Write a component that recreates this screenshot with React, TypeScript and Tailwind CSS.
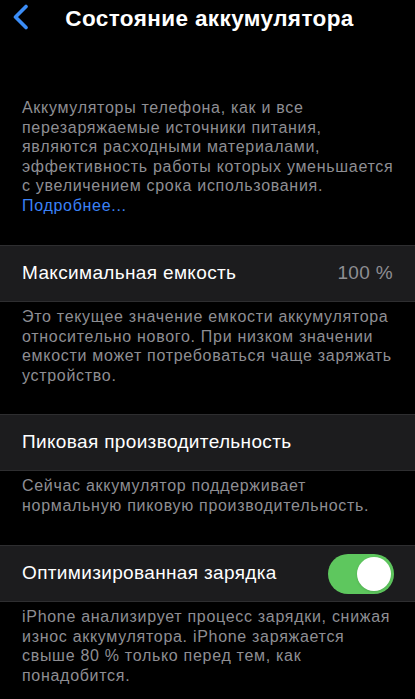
export default function App() {
  return (
    <div
      className="w-[415px] h-[699px] overflow-hidden bg-black text-white"
      style={{ fontFamily: '"Liberation Sans", Arial, sans-serif' }}
    >
      {/* Шапка */}
      <header className="relative h-[36px] flex items-center justify-center">
        <svg
          className="absolute left-[12px] top-[4px]"
          width="17"
          height="26"
          viewBox="0 0 17 26"
          fill="none"
        >
          <path d="M14 2.5 L3.5 13 L14 23.5" stroke="#3b8df7" strokeWidth="3.6" strokeLinecap="round" strokeLinejoin="round" />
        </svg>
        <h1 className="text-[22.5px] font-bold tracking-[0.4px] ml-[4px] mt-[1px]">Состояние аккумулятора</h1>
      </header>

      <p className="mt-[62px] px-[22px] text-[16px] leading-[19.5px] tracking-[0.7px] text-[#8e8e93] whitespace-nowrap">
        Аккумуляторы телефона, как и все
        <br />
        перезаряжаемые источники питания,
        <br />
        являются расходными материалами,
        <br />
        эффективность работы которых уменьшается
        <br />
        с увеличением срока использования.
        <br />
        <span className="text-[#3b82f6]">Подробнее...</span>
      </p>

      <Row className="mt-[30px]" title="Максимальная емкость" right={<span className="text-[#8e8e93]">100 %</span>} />
      <Note>
        Это текущее значение емкости аккумулятора
        <br />
        относительно нового. При низком значении
        <br />
        емкости может потребоваться чаще заряжать
        <br />
        устройство.
      </Note>

      <Row className="mt-[29px]" title="Пиковая производительность" />
      <Note>
        Сейчас аккумулятор поддерживает
        <br />
        нормальную пиковую производительность.
      </Note>

      <Row className="mt-[30px]" title="Оптимизированная зарядка" right={<Toggle />} />
      <Note>
        iPhone анализирует процесс зарядки, снижая
        <br />
        износ аккумулятора. iPhone заряжается
        <br />
        свыше 80 % только перед тем, как
        <br />
        понадобится.
      </Note>
    </div>
  );
}

function Row({ title, right, className = '' }: { title: string; right?: React.ReactNode; className?: string }) {
  return (
    <div
      className={`h-[57px] flex items-center justify-between pl-[22px] pr-[22px] bg-[#1c1c1e] border-y border-[#2e2e30] ${className}`}
    >
      <span className="text-[19px] tracking-[0.35px] text-white">{title}</span>
      {right && <span className="text-[19px] tracking-[0.35px]">{right}</span>}
    </div>
  );
}

function Note({ children }: { children: React.ReactNode }) {
  return (
    <p className="mt-[5px] px-[22px] text-[16px] leading-[19.5px] tracking-[0.7px] text-[#8e8e93] whitespace-nowrap">
      {children}
    </p>
  );
}

function Toggle() {
  return (
    <div className="relative w-[66px] h-[40px] rounded-full bg-[#5ec75e] -mr-[1px]">
      <div className="absolute right-[3px] top-[3px] w-[34px] h-[34px] rounded-full bg-white shadow" />
    </div>
  );
}
